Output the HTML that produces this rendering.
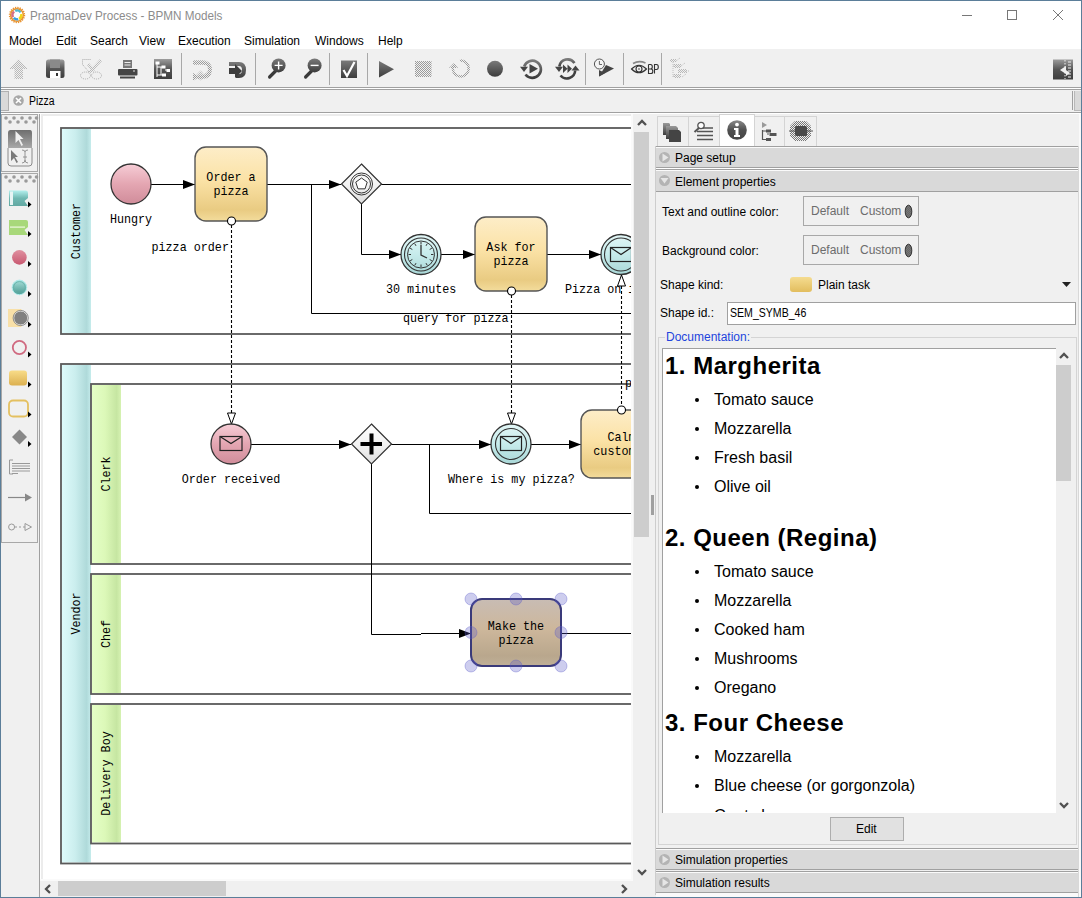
<!DOCTYPE html>
<html><head><meta charset="utf-8">
<style>
*{margin:0;padding:0;box-sizing:border-box}
html,body{width:1082px;height:898px;overflow:hidden;background:#f0f0f0}
body{position:relative;font-family:"Liberation Sans",sans-serif;font-size:12px;color:#000}
.a{position:absolute}
.t{position:absolute;white-space:pre;line-height:1}
svg{position:absolute;overflow:visible}
.hd{position:absolute;left:656px;width:422px;height:22px;background:#d9d9d9;border-top:1px solid #a0a0a0;border-bottom:1px solid #a0a0a0;box-shadow:inset 0 1px 0 #fafafa}
.hd .c{position:absolute;left:3px;top:5px;width:11px;height:11px;border-radius:50%;background:#b4b4b4}
.hd .l{position:absolute;left:19px;top:5px;white-space:pre;line-height:1}
.doc{position:absolute;font-size:16px;white-space:pre;line-height:1}
.h{position:absolute;font-size:24px;font-weight:bold;white-space:pre;line-height:1;letter-spacing:0.5px}
.bu{position:absolute;width:4px;height:4px;border-radius:50%;background:#000}
</style></head><body>
<!-- title bar + menu -->
<div class="a" style="left:1px;top:1px;width:1080px;height:48px;background:#fff"></div>
<svg style="left:8px;top:6px" width="18" height="18" viewBox="0 0 18 18">
 <circle cx="9" cy="9" r="7.4" fill="none" stroke="#e8912c" stroke-width="1.6" stroke-dasharray="1.3 1.03"/>
 <circle cx="9" cy="9" r="6.3" fill="none" stroke="#e8912c" stroke-width="1.5"/>
 <path d="M5.2 11.2 A4.3 4.3 0 0 1 6.2 5.6" stroke="#d47088" stroke-width="2.4" fill="none"/>
 <path d="M7.2 4.9 A4.3 4.3 0 0 1 12.6 6.4" stroke="#50b8d0" stroke-width="2.4" fill="none"/>
 <path d="M13.2 8 A4.3 4.3 0 0 1 11 12.9" stroke="#f2d818" stroke-width="2.4" fill="none"/>
 <path d="M10.2 13.2 A4.3 4.3 0 0 1 5.8 11.8" stroke="#3aa0e0" stroke-width="2.4" fill="none"/>
</svg>
<div class="t" style="left:30px;top:10px;color:#8c8c8c;transform:scaleX(0.975);transform-origin:0 0">PragmaDev Process - BPMN Models</div>
<div class="a" style="left:962px;top:15px;width:10px;height:1px;background:#777"></div>
<div class="a" style="left:1007px;top:10px;width:10px;height:10px;border:1px solid #777"></div>
<svg style="left:1053px;top:10px" width="10" height="10"><path d="M0 0L10 10M10 0L0 10" stroke="#777" stroke-width="1"/></svg>
<div class="t" style="left:9px;top:35px;">Model</div>
<div class="t" style="left:56px;top:35px;">Edit</div>
<div class="t" style="left:90px;top:35px;">Search</div>
<div class="t" style="left:139px;top:35px;">View</div>
<div class="t" style="left:178px;top:35px;">Execution</div>
<div class="t" style="left:244px;top:35px;">Simulation</div>
<div class="t" style="left:315px;top:35px;">Windows</div>
<div class="t" style="left:378px;top:35px;">Help</div>

<!-- TOOLBAR -->
<div id="toolbar"><svg style="left:0;top:0" width="1082" height="120" viewBox="0 0 1082 120">
<defs>
<pattern id="dg" width="2" height="2" patternUnits="userSpaceOnUse"><rect width="1" height="1" fill="#9a9a9a"/><rect x="1" y="1" width="1" height="1" fill="#9a9a9a"/></pattern>
<pattern id="dg2" width="2" height="2" patternUnits="userSpaceOnUse"><rect width="1" height="1" fill="#b8b8b8"/><rect x="1" y="1" width="1" height="1" fill="#b8b8b8"/></pattern>
<linearGradient id="tg" x1="0" y1="0" x2="0" y2="1"><stop offset="0" stop-color="#9c9c9c"/><stop offset="0.5" stop-color="#555"/><stop offset="1" stop-color="#3e3e3e"/></linearGradient>
<linearGradient id="tg2" x1="0" y1="0" x2="0" y2="1"><stop offset="0" stop-color="#7a7a7a"/><stop offset="1" stop-color="#3c3c3c"/></linearGradient>
</defs>
<rect x="181" y="53" width="1" height="32" fill="#a8a8a8"/>
<rect x="255" y="53" width="1" height="32" fill="#a8a8a8"/>
<rect x="329" y="53" width="1" height="32" fill="#a8a8a8"/>
<rect x="367" y="53" width="1" height="32" fill="#a8a8a8"/>
<rect x="585" y="53" width="1" height="32" fill="#a8a8a8"/>
<rect x="623" y="53" width="1" height="32" fill="#a8a8a8"/>
<rect x="661" y="53" width="1" height="32" fill="#a8a8a8"/>
<path d="M18.5 59 L28 69 L23 69 L23 79 L14.5 79 L14.5 69 L9 69Z" fill="url(#dg2)"/>
<rect x="46" y="59.5" width="18.5" height="18.5" rx="2.5" fill="url(#tg)"/>
<rect x="50" y="59.5" width="10" height="8.5" fill="#8a8a8a"/>
<rect x="50" y="71" width="10.5" height="7" fill="#fff"/>
<rect x="56" y="73" width="2" height="3" fill="#333"/>
<g fill="none" stroke="#aaa" stroke-width="1" stroke-dasharray="1 1"><ellipse cx="85.5" cy="75.5" rx="5" ry="3.5"/><ellipse cx="96.5" cy="75.5" rx="5" ry="3.5"/><path d="M89 72 L82.5 64.5 V59.5 H91"/></g>
<path d="M88 72 L100 59 L102 61 L91 73Z M93 72 L87 65 L89 63 L95 70Z" fill="url(#dg2)"/>
<rect x="123" y="60" width="9" height="8" fill="#777"/><path d="M124.5 62.5H130.5M124.5 65H130.5" stroke="#eee" stroke-width="1"/>
<rect x="118" y="69" width="19.5" height="6.5" rx="1" fill="#444"/><rect x="133" y="70.5" width="2" height="1" fill="#ddd"/>
<rect x="120" y="76.5" width="15" height="2" fill="#444"/>
<rect x="154" y="59" width="18" height="20" fill="url(#tg)"/>
<path d="M157 64 V77 M157 67 H163 M161 67 V75 M157 75 H163 M165 70 H167" stroke="#fff" stroke-width="1" fill="none"/>
<rect x="155.5" y="61.5" width="4" height="3" fill="#fff"/><rect x="161.5" y="65.5" width="4" height="3" fill="#fff"/><rect x="166.5" y="69" width="3.5" height="3" fill="#fff"/><rect x="162" y="73.5" width="4" height="3" fill="#fff"/>
<path d="M193 62 H203 A7 7 0 0 1 203 76 H198 L202 72 M198 76 L202 79" fill="none" stroke="url(#dg2)" stroke-width="4"/>
<path d="M193 63 H203 Q210 63 210 69.5 Q210 77 203 77 H198" fill="none" stroke="url(#dg)" stroke-width="3.5"/><path d="M193 73 L199 77 L193 81Z" fill="url(#dg)"/>
<path d="M229 62 H239 Q246 62 246 70 Q246 78 239 78 H236 V74 H239 Q242 74 242 70 Q242 66 239 66 H229Z" fill="url(#tg2)"/>
<path d="M229 68 H235 V64 L242 71 L235 78 V74 H229Z" fill="#3c3c3c"/>
<path d="M269.6 77 L275.6 71" stroke="#3a3a3a" stroke-width="3.2" stroke-linecap="round"/>
<circle cx="278.6" cy="65.4" r="7" fill="url(#tg2)"/>
<path d="M274.6 65.4 H282.6 M278.6 61.4 V69.4" stroke="#fff" stroke-width="1.4"/>
<path d="M305.6 77 L311.6 71" stroke="#3a3a3a" stroke-width="3.2" stroke-linecap="round"/>
<circle cx="314.6" cy="65.4" r="7" fill="url(#tg2)"/>
<path d="M310.6 65.4 H318.6" stroke="#fff" stroke-width="1.4"/>
<rect x="341" y="60.5" width="16" height="17.5" fill="url(#tg2)"/>
<path d="M343.5 70 L347 76 L354.5 62" fill="none" stroke="#fff" stroke-width="2.2"/>
<path d="M379 61 L394 69.2 L379 77.5Z" fill="url(#tg2)"/>
<rect x="415" y="61" width="16.5" height="16" fill="url(#dg)"/>
<path d="M453.5 65 A8 8 0 1 0 460 60.5" fill="none" stroke="url(#dg)" stroke-width="2.4"/><path d="M449 68 L454 63 L458 68Z" fill="url(#dg)"/>
<circle cx="495" cy="68.8" r="8" fill="url(#tg2)"/>
<path d="M524.2 66.5 A8.6 8.6 0 1 1 525.5 74.5" fill="none" stroke="url(#tg2)" stroke-width="2.6"/>
<path d="M520 66.8 L528 66.8 L524 72Z" fill="#444"/>
<path d="M529.5 64 L538 68.8 L529.5 73.5Z" fill="#444"/>
<path d="M559.3 66.5 A8.4 8.4 0 0 1 574.5 63" fill="none" stroke="url(#tg2)" stroke-width="2.6"/>
<path d="M575.2 70.5 A8.4 8.4 0 0 1 560.5 75.5" fill="none" stroke="#404040" stroke-width="2.6"/>
<path d="M555 66.8 L563 66.8 L559 72Z" fill="#444"/><path d="M571.5 70.5 L579.5 70.5 L575.5 65.5Z" fill="#444"/>
<path d="M563 64.5 L567.5 68.8 L563 73Z M567.5 64.5 L572 68.8 L567.5 73Z" fill="#444"/>
<circle cx="599.4" cy="64" r="5" fill="#f4f4f4" stroke="#555" stroke-width="1"/><path d="M599.4 61 V64.5 H602" stroke="#555" stroke-width="0.9" fill="none"/>
<path d="M599 76.5 L614 68.5 L606 65Z" fill="#444"/><path d="M599 70 L599 76.5 L605 73Z" fill="#444"/>
<path d="M631.5 69 Q639 61.5 646.5 69 Q639 76.5 631.5 69Z" fill="none" stroke="#333" stroke-width="1.1"/><circle cx="639" cy="69" r="3" fill="none" stroke="#333" stroke-width="1.1"/><circle cx="639" cy="69" r="0.8" fill="#333"/>
<path d="M633 63.5 Q639 60 645.5 63" fill="none" stroke="#888" stroke-width="1.6"/>
<path d="M648.5 64.5 V73.5 H651 Q652.8 73.5 652.8 71.2 Q652.8 69 651 69 H648.5 M648.5 64.5 H650.6 Q652.3 64.5 652.3 66.7 Q652.3 69 650.6 69" fill="none" stroke="#333" stroke-width="1.1"/>
<path d="M654.5 73.5 V64.5 H656.5 Q658.3 64.5 658.3 67 Q658.3 69.5 656.5 69.5 H654.5" fill="none" stroke="#333" stroke-width="1.1"/>
<g fill="url(#dg2)"><rect x="670" y="59" width="6" height="3"/><rect x="674" y="64" width="7" height="4"/><rect x="678" y="69" width="9" height="4"/><rect x="674" y="74" width="7" height="4"/></g>
<path d="M673 62 V78 M673 66 H675 M673 76 H675 M681 66 L685 63 M682 77 L686 74 M676 61 L680 58 M686 71 L689 71" stroke="#c0c0c0" stroke-width="1" stroke-dasharray="1 1" fill="none"/>
<rect x="1053" y="59.5" width="20" height="20" fill="url(#tg)"/>
<path d="M1065 60 V79" stroke="#f0f0f0" stroke-width="1" stroke-dasharray="1.5 1.5"/><path d="M1066 66 L1060 70 L1066 74Z M1066 70 L1070 73 L1066 76Z" fill="#f0f0f0"/>
<path d="M1068 62 H1071 M1068 65 H1071 M1068 68 H1071 M1068 71 H1071 M1068 74 H1071 M1068 77 H1071" stroke="#f0f0f0" stroke-width="1"/>
</svg></div><!--/toolbar-->

<!-- toolbar bottom lines -->
<div class="a" style="left:1px;top:87px;width:1080px;height:1px;background:#a0a0a0"></div>
<div class="a" style="left:1px;top:88px;width:1080px;height:1px;background:#fff"></div>
<div class="a" style="left:1px;top:89px;width:1080px;height:1px;background:#a0a0a0"></div>
<!-- tab bar -->
<div class="a" style="left:1px;top:91px;width:8px;height:20px;background:#d9d9d9;border:1px solid #b0b0b0;border-left:none"></div>
<svg style="left:13px;top:95px" width="11" height="11"><circle cx="5.5" cy="5.5" r="5.3" fill="#a8a8a8"/><path d="M3 3L8 8M8 3L3 8" stroke="#fff" stroke-width="1.6"/></svg>
<div class="t" style="left:29px;top:95px;transform:scaleX(0.87);transform-origin:0 0">Pizza</div>
<div class="a" style="left:1072px;top:91px;width:1px;height:19px;background:#a0a0a0"></div><div class="a" style="left:1074px;top:91px;width:7px;height:20px;background:#d9d9d9;border-left:1px solid #b8b8b8;border-bottom:1px solid #b8b8b8"></div>
<div class="a" style="left:1px;top:112px;width:1080px;height:1px;background:#a0a0a0"></div>
<div class="a" style="left:1px;top:113px;width:1080px;height:1px;background:#fff"></div>

<!-- PALETTE -->
<div id="palette"><svg style="left:0;top:0" width="45" height="560" viewBox="0 0 45 560">
<defs>
<linearGradient id="pSel" x1="0" y1="0" x2="0" y2="1"><stop offset="0" stop-color="#6e6e6e"/><stop offset="1" stop-color="#a8a8a8"/></linearGradient>
<linearGradient id="pPool" x1="0" y1="0" x2="0" y2="1"><stop offset="0" stop-color="#b4f0ee"/><stop offset="0.5" stop-color="#70b8b2"/><stop offset="1" stop-color="#62a8a2"/></linearGradient>
<linearGradient id="pRed" x1="0" y1="0" x2="0" y2="1"><stop offset="0" stop-color="#e090a0"/><stop offset="1" stop-color="#c85870"/></linearGradient>
<linearGradient id="pTeal" x1="0" y1="0" x2="0" y2="1"><stop offset="0" stop-color="#a8e0da"/><stop offset="1" stop-color="#4a9890"/></linearGradient>
<linearGradient id="pYel" x1="0" y1="0" x2="0" y2="1"><stop offset="0" stop-color="#f8dc88"/><stop offset="1" stop-color="#dcb050"/></linearGradient>
</defs>
<rect x="1.5" y="114.5" width="36" height="57" fill="#f0f0f0" stroke="#a8a8a8" stroke-width="1"/>
<rect x="1.5" y="173.5" width="36" height="369" fill="#f0f0f0" stroke="#a8a8a8" stroke-width="1"/>
<rect x="39" y="114" width="1" height="784" fill="#a8a8a8"/>
<circle cx="6" cy="118" r="1.8" fill="#9a9a9a"/>
<circle cx="14" cy="118" r="1.8" fill="#9a9a9a"/>
<circle cx="22" cy="118" r="1.8" fill="#9a9a9a"/>
<circle cx="30" cy="118" r="1.8" fill="#9a9a9a"/>
<circle cx="36.5" cy="118" r="1.8" fill="#9a9a9a"/>
<circle cx="10" cy="122" r="1.8" fill="#9a9a9a"/>
<circle cx="18" cy="122" r="1.8" fill="#9a9a9a"/>
<circle cx="26" cy="122" r="1.8" fill="#9a9a9a"/>
<circle cx="34" cy="122" r="1.8" fill="#9a9a9a"/>
<circle cx="6" cy="177" r="1.8" fill="#9a9a9a"/>
<circle cx="14" cy="177" r="1.8" fill="#9a9a9a"/>
<circle cx="22" cy="177" r="1.8" fill="#9a9a9a"/>
<circle cx="30" cy="177" r="1.8" fill="#9a9a9a"/>
<circle cx="36.5" cy="177" r="1.8" fill="#9a9a9a"/>
<circle cx="10" cy="181" r="1.8" fill="#9a9a9a"/>
<circle cx="18" cy="181" r="1.8" fill="#9a9a9a"/>
<circle cx="26" cy="181" r="1.8" fill="#9a9a9a"/>
<circle cx="34" cy="181" r="1.8" fill="#9a9a9a"/>
<path d="M10.5 130 H30 Q32 130 32 133 V148 H8 V133 Q8 130 10.5 130Z" fill="url(#pSel)"/>
<path d="M8 148 V163 Q8 166 11 166 H29 Q32 166 32 163 V148" fill="none" stroke="#8a8a8a" stroke-width="1"/>
<path d="M15.5 131 L23.5 139 L20 139 L23 145 L21.5 146 L18.5 140 L15.5 143Z" fill="#f0f0f0"/>
<path d="M11 150 L18 157 L15 157 L18 162 L16.5 163 L14 158 L11 161Z" fill="#7a7a7a"/>
<path d="M22 150 Q25 150 25 152 Q25 150 28 150 M25 152 V160 Q25 163 22 163 M25 160 Q25 163 28 163 M23 157 H27" fill="none" stroke="#8a8a8a" stroke-width="0.9"/>
<path d="M9 190.5 H26 Q28 190.5 28 193 V198 L24.5 201 L28 206 H9Z" fill="url(#pPool)"/>
<rect x="10" y="191.5" width="3" height="13.5" fill="#e8f4f4"/>
<path d="M28 201.5 L31.5 204.5 L28 207.5Z" fill="#000"/>
<path d="M9 220 H26 Q28 220 28 222 V227 L24.5 230 L28 235 H9Z" fill="#a8d87a"/>
<rect x="10" y="226.5" width="15" height="1.2" fill="#eef8e0"/>
<path d="M28 231 L31.5 234 L28 237Z" fill="#000"/>
<circle cx="19.4" cy="257.4" r="7.3" fill="url(#pRed)"/>
<path d="M28 261 L31.5 264 L28 267Z" fill="#000"/>
<circle cx="19.4" cy="287.4" r="7.3" fill="url(#pTeal)" stroke="#b0ecec" stroke-width="1"/>
<circle cx="19.4" cy="287.4" r="5.8" fill="none" stroke="#60b0a8" stroke-width="0.8"/>
<path d="M28 291 L31.5 294 L28 297Z" fill="#000"/>
<rect x="8" y="309" width="13.5" height="18" fill="#f8e0a8"/>
<circle cx="20.7" cy="318" r="7" fill="#808080" stroke="#e8e8e8" stroke-width="1"/>
<circle cx="20.7" cy="318" r="7.6" fill="none" stroke="#777" stroke-width="0.8"/>
<path d="M28 321.5 L31.5 324.5 L28 327.5Z" fill="#000"/>
<circle cx="19.4" cy="347.5" r="6.6" fill="none" stroke="#d06a80" stroke-width="1.8"/>
<path d="M28 351.5 L31.5 354.5 L28 357.5Z" fill="#000"/>
<rect x="9" y="370.5" width="18" height="15" rx="3" fill="url(#pYel)"/>
<path d="M28 381.5 L31.5 384.5 L28 387.5Z" fill="#000"/>
<rect x="9" y="400.5" width="19" height="16" rx="4" fill="none" stroke="#e4c060" stroke-width="1.8"/>
<path d="M28 411.5 L31.5 414.5 L28 417.5Z" fill="#000"/>
<path d="M19.5 429.5 L27 437 L19.5 444.5 L12 437Z" fill="#888"/>
<path d="M28 441 L31.5 444 L28 447Z" fill="#000"/>
<path d="M9.5 460 V474 H13 M9.5 460 H13" fill="none" stroke="#999" stroke-width="1"/>
<rect x="12" y="463" width="18" height="1" fill="#999"/>
<rect x="12" y="465.5" width="18" height="1" fill="#999"/>
<rect x="12" y="468" width="18" height="1" fill="#999"/>
<rect x="12" y="470.5" width="18" height="1" fill="#999"/>
<rect x="12" y="473" width="6" height="1" fill="#999"/>
<path d="M8 497.5 H26" stroke="#888" stroke-width="1.2"/><path d="M25 493.5 L32 497.5 L25 501.5Z" fill="#888"/>
<circle cx="11.6" cy="527" r="3" fill="none" stroke="#999" stroke-width="1"/>
<path d="M15 527 H25" stroke="#999" stroke-width="1" stroke-dasharray="2 2"/>
<path d="M25 523.5 L31.5 527 L25 530.5Z" fill="none" stroke="#999" stroke-width="1"/>
</svg></div><!--/palette-->

<!-- CANVAS -->
<div class="a" style="left:39px;top:114px;width:1px;height:784px;background:#a0a0a0"></div>
<div class="a" style="left:40px;top:114px;width:592px;height:765px;background:#fff"></div>
<div class="a" style="left:41px;top:114px;width:593px;height:2px;background:#ececec"></div>
<div class="a" style="left:41px;top:114px;width:2px;height:766px;background:#ececec"></div>
<div class="a" style="left:631px;top:114px;width:2px;height:767px;background:#fafafa"></div><div class="a" style="left:40px;top:879px;width:593px;height:2px;background:#fafafa"></div><div id="diagram"><svg style="left:0;top:0" width="1082" height="898" viewBox="0 0 1082 898">
<defs>
<clipPath id="cv"><rect x="43" y="116" width="588" height="763"/></clipPath>
<linearGradient id="gTask" x1="0" y1="0" x2="0" y2="1">
 <stop offset="0" stop-color="#fdedc8"/><stop offset="0.45" stop-color="#fbe2a6"/><stop offset="0.85" stop-color="#e9cb82"/><stop offset="1" stop-color="#f3dc9c"/></linearGradient>
<linearGradient id="gSel" x1="0" y1="0" x2="0" y2="1">
 <stop offset="0" stop-color="#c8bcb4"/><stop offset="0.45" stop-color="#cdb79b"/><stop offset="0.85" stop-color="#b9a78d"/><stop offset="1" stop-color="#c0b098"/></linearGradient>
<linearGradient id="gPink" x1="0" y1="0" x2="0" y2="1">
 <stop offset="0" stop-color="#f6cdd6"/><stop offset="0.5" stop-color="#e4a6b2"/><stop offset="1" stop-color="#d08c9a"/></linearGradient>
<linearGradient id="gCyan" x1="0" y1="0" x2="0" y2="1">
 <stop offset="0" stop-color="#e2f6f6"/><stop offset="0.5" stop-color="#c6ebeb"/><stop offset="1" stop-color="#a9d7d7"/></linearGradient>
<linearGradient id="gGw" x1="0" y1="0" x2="0" y2="1">
 <stop offset="0" stop-color="#ffffff"/><stop offset="0.6" stop-color="#f0f0f0"/><stop offset="1" stop-color="#dcdcdc"/></linearGradient>
<linearGradient id="gPoolH" x1="0" y1="0" x2="1" y2="0">
 <stop offset="0" stop-color="#ddfafa"/><stop offset="0.45" stop-color="#cbeeee"/><stop offset="0.85" stop-color="#afdada"/><stop offset="1" stop-color="#c6ecec"/></linearGradient>
<linearGradient id="gLaneH" x1="0" y1="0" x2="1" y2="0">
 <stop offset="0" stop-color="#e4ffc6"/><stop offset="0.45" stop-color="#dcf8b8"/><stop offset="0.85" stop-color="#c6e6a2"/><stop offset="1" stop-color="#d6f2b2"/></linearGradient>
</defs>
<g clip-path="url(#cv)" font-family="Liberation Mono" font-size="12.7" fill="#000">
<rect x="62" y="129" width="29" height="204" fill="url(#gPoolH)"/>
<rect x="61" y="128" width="700" height="206" fill="none" stroke="#5a5a5a" stroke-width="1.8"/>
<text x="76" y="231" transform="rotate(-90 76 231)" text-anchor="middle" dy="4" textLength="56.32" lengthAdjust="spacingAndGlyphs">Customer</text>
<rect x="62" y="365" width="29" height="497.5" fill="url(#gPoolH)"/>
<rect x="61" y="364" width="700" height="499.5" fill="none" stroke="#5a5a5a" stroke-width="1.8"/>
<text x="76" y="613.5" transform="rotate(-90 76 613.5)" text-anchor="middle" dy="4" textLength="42.24" lengthAdjust="spacingAndGlyphs">Vendor</text>
<rect x="92" y="385" width="29" height="178" fill="url(#gLaneH)"/>
<rect x="91" y="384" width="700" height="180" fill="none" stroke="#5a5a5a" stroke-width="1.8"/>
<text x="106" y="474" transform="rotate(-90 106 474)" text-anchor="middle" dy="4" textLength="35.20" lengthAdjust="spacingAndGlyphs">Clerk</text>
<rect x="92" y="575" width="29" height="118" fill="url(#gLaneH)"/>
<rect x="91" y="574" width="700" height="120" fill="none" stroke="#5a5a5a" stroke-width="1.8"/>
<text x="106" y="634" transform="rotate(-90 106 634)" text-anchor="middle" dy="4" textLength="28.16" lengthAdjust="spacingAndGlyphs">Chef</text>
<rect x="92" y="705" width="29" height="137.5" fill="url(#gLaneH)"/>
<rect x="91" y="704" width="700" height="139.5" fill="none" stroke="#5a5a5a" stroke-width="1.8"/>
<text x="106" y="773.5" transform="rotate(-90 106 773.5)" text-anchor="middle" dy="4" textLength="84.48" lengthAdjust="spacingAndGlyphs">Delivery Boy</text>
<path d="M151 184.5 L195 184.5" fill="none" stroke="#000" stroke-width="1.0"/>
<path d="M195 184.5 L183 180.0 L183 189.0Z" fill="#000"/>
<path d="M267 184.5 L341 184.5" fill="none" stroke="#000" stroke-width="1.0"/>
<path d="M341 184.5 L329 180.0 L329 189.0Z" fill="#000"/>
<path d="M311.5 184.5 L311.5 313.5 L640 313.5" fill="none" stroke="#000" stroke-width="1.0"/>
<path d="M381 184.5 L640 184.5" fill="none" stroke="#000" stroke-width="1.0"/>
<path d="M361.5 204 L361.5 254.5 L401 254.5" fill="none" stroke="#000" stroke-width="1.0"/>
<path d="M401 254.5 L389 250.0 L389 259.0Z" fill="#000"/>
<path d="M441 254.5 L475 254.5" fill="none" stroke="#000" stroke-width="1.0"/>
<path d="M475 254.5 L463 250.0 L463 259.0Z" fill="#000"/>
<path d="M547 254.5 L601 254.5" fill="none" stroke="#000" stroke-width="1.0"/>
<path d="M601 254.5 L589 250.0 L589 259.0Z" fill="#000"/>
<circle cx="131" cy="184" r="20" fill="url(#gPink)" stroke="#333" stroke-width="1.3"/>
<rect x="195" y="147" width="72" height="74" rx="11" fill="url(#gTask)" stroke="#555" stroke-width="1.4"/>
<text x="231.0" y="181.0" text-anchor="middle" textLength="49.28" lengthAdjust="spacingAndGlyphs">Order a</text>
<text x="231.0" y="195.0" text-anchor="middle" textLength="35.20" lengthAdjust="spacingAndGlyphs">pizza</text>
<path d="M361.5 164 L381.5 184 L361.5 204 L341.5 184Z" fill="url(#gGw)" stroke="#333" stroke-width="1.2"/>
<circle cx="361.5" cy="184" r="11" fill="none" stroke="#333" stroke-width="1"/>
<circle cx="361.5" cy="184" r="9" fill="none" stroke="#333" stroke-width="1"/>
<path d="M361.50 178.00 L367.21 182.15 L365.03 188.85 L357.97 188.85 L355.79 182.15Z" fill="#fff" stroke="#333" stroke-width="1"/>
<circle cx="421" cy="254.5" r="20" fill="url(#gCyan)" stroke="#333" stroke-width="1.3"/>
<circle cx="421" cy="254.5" r="16.5" fill="none" stroke="#333" stroke-width="1.1"/>
<circle cx="421" cy="254.5" r="13.5" fill="none" stroke="#333" stroke-width="1"/>
<path d="M431.00 254.50 L433.50 254.50" stroke="#333" stroke-width="1"/>
<path d="M429.66 259.50 L431.83 260.75" stroke="#333" stroke-width="1"/>
<path d="M426.00 263.16 L427.25 265.33" stroke="#333" stroke-width="1"/>
<path d="M421.00 264.50 L421.00 267.00" stroke="#333" stroke-width="1"/>
<path d="M416.00 263.16 L414.75 265.33" stroke="#333" stroke-width="1"/>
<path d="M412.34 259.50 L410.17 260.75" stroke="#333" stroke-width="1"/>
<path d="M411.00 254.50 L408.50 254.50" stroke="#333" stroke-width="1"/>
<path d="M412.34 249.50 L410.17 248.25" stroke="#333" stroke-width="1"/>
<path d="M416.00 245.84 L414.75 243.67" stroke="#333" stroke-width="1"/>
<path d="M421.00 244.50 L421.00 242.00" stroke="#333" stroke-width="1"/>
<path d="M426.00 245.84 L427.25 243.67" stroke="#333" stroke-width="1"/>
<path d="M429.66 249.50 L431.83 248.25" stroke="#333" stroke-width="1"/>
<path d="M421 245 V255 L427 258" fill="none" stroke="#333" stroke-width="1.3"/>
<rect x="475" y="217" width="72" height="74" rx="11" fill="url(#gTask)" stroke="#555" stroke-width="1.4"/>
<text x="511.0" y="251.0" text-anchor="middle" textLength="49.28" lengthAdjust="spacingAndGlyphs">Ask for</text>
<text x="511.0" y="265.0" text-anchor="middle" textLength="35.20" lengthAdjust="spacingAndGlyphs">pizza</text>
<circle cx="621" cy="254.5" r="20" fill="url(#gCyan)" stroke="#333" stroke-width="1.3"/>
<circle cx="621" cy="254.5" r="16.5" fill="none" stroke="#333" stroke-width="1.1"/>
<rect x="610.5" y="247.5" width="21" height="14" fill="none" stroke="#222" stroke-width="1.2"/>
<path d="M610.5 247.5 L621 254.5 L631.5 247.5" fill="none" stroke="#222" stroke-width="1.2"/>
<text x="131" y="223" text-anchor="middle" textLength="42.24" lengthAdjust="spacingAndGlyphs">Hungry</text>
<text x="151.5" y="251" text-anchor="start" textLength="77.44" lengthAdjust="spacingAndGlyphs">pizza order</text>
<text x="386" y="292.5" text-anchor="start" textLength="70.40" lengthAdjust="spacingAndGlyphs">30 minutes</text>
<text x="565" y="292.5" text-anchor="start" textLength="112.64" lengthAdjust="spacingAndGlyphs">Pizza on its way</text>
<text x="403" y="321.5" text-anchor="start" textLength="105.60" lengthAdjust="spacingAndGlyphs">query for pizza</text>
<circle cx="231.5" cy="221" r="4" fill="#fff" stroke="#000" stroke-width="1.1"/>
<path d="M231.5 225 V413" stroke="#000" stroke-width="1.1" stroke-dasharray="3 2"/>
<path d="M231.5 424 L227.5 413 L235.5 413Z" fill="#fff" stroke="#000" stroke-width="1"/>
<circle cx="511.5" cy="291" r="4" fill="#fff" stroke="#000" stroke-width="1.1"/>
<path d="M511.5 295 V413" stroke="#000" stroke-width="1.1" stroke-dasharray="3 2"/>
<path d="M511.5 424 L507.5 413 L515.5 413Z" fill="#fff" stroke="#000" stroke-width="1"/>
<path d="M621.5 286 V406" stroke="#000" stroke-width="1.1" stroke-dasharray="3 2"/>
<path d="M621.5 275 L617.5 286 L625.5 286Z" fill="#fff" stroke="#000" stroke-width="1"/>
<path d="M251 444.5 L351 444.5" fill="none" stroke="#000" stroke-width="1.0"/>
<path d="M351 444.5 L339 440.0 L339 449.0Z" fill="#000"/>
<path d="M391 444.5 L491 444.5" fill="none" stroke="#000" stroke-width="1.0"/>
<path d="M491 444.5 L479 440.0 L479 449.0Z" fill="#000"/>
<path d="M429.5 444.5 L429.5 513.5 L640 513.5" fill="none" stroke="#000" stroke-width="1.0"/>
<path d="M531 444.5 L581 444.5" fill="none" stroke="#000" stroke-width="1.0"/>
<path d="M581 444.5 L569 440.0 L569 449.0Z" fill="#000"/>
<path d="M371.5 464 L371.5 634.5 L421 634.5" fill="none" stroke="#000" stroke-width="1.0"/>
<path d="M421 633.5 L471 633.5" fill="none" stroke="#000" stroke-width="1.0"/>
<path d="M471 633.5 L459 629.0 L459 638.0Z" fill="#000"/>
<path d="M561 633.5 L640 633.5" fill="none" stroke="#000" stroke-width="1.0"/>
<circle cx="231" cy="444" r="20" fill="url(#gPink)" stroke="#333" stroke-width="1.3"/>
<rect x="220.0" y="436.5" width="22" height="14" fill="none" stroke="#222" stroke-width="1.2"/>
<path d="M220.0 436.5 L231 443.5 L242.0 436.5" fill="none" stroke="#222" stroke-width="1.2"/>
<path d="M371.5 424 L391.5 444 L371.5 464 L351.5 444Z" fill="url(#gGw)" stroke="#333" stroke-width="1.2"/>
<path d="M371.5 433.5 V454.5 M360.5 444 H382" stroke="#000" stroke-width="4"/>
<circle cx="511" cy="444" r="20" fill="url(#gCyan)" stroke="#333" stroke-width="1.3"/>
<circle cx="511" cy="444" r="15.5" fill="none" stroke="#333" stroke-width="1.1"/>
<rect x="500.5" y="436.5" width="21" height="14" fill="none" stroke="#222" stroke-width="1.2"/>
<path d="M500.5 436.5 L511 443.5 L521.5 436.5" fill="none" stroke="#222" stroke-width="1.2"/>
<rect x="581" y="410" width="81" height="68" rx="11" fill="url(#gTask)" stroke="#555" stroke-width="1.4"/>
<text x="621.5" y="441.0" text-anchor="middle" textLength="28.16" lengthAdjust="spacingAndGlyphs">Calm</text>
<text x="621.5" y="455.0" text-anchor="middle" textLength="56.32" lengthAdjust="spacingAndGlyphs">customer</text>
<circle cx="621.5" cy="410" r="4" fill="#fff" stroke="#000" stroke-width="1.1"/>
<text x="231" y="482.5" text-anchor="middle" textLength="98.56" lengthAdjust="spacingAndGlyphs">Order received</text>
<text x="448" y="483" text-anchor="start" textLength="126.72" lengthAdjust="spacingAndGlyphs">Where is my pizza?</text>
<text x="625" y="386.5" text-anchor="start" textLength="35.20" lengthAdjust="spacingAndGlyphs">pizza</text>
<rect x="471" y="599" width="90" height="67" rx="11" fill="url(#gSel)" stroke="#3a3a7a" stroke-width="2"/>
<text x="516.0" y="629.5" text-anchor="middle" textLength="56.32" lengthAdjust="spacingAndGlyphs">Make the</text>
<text x="516.0" y="643.5" text-anchor="middle" textLength="35.20" lengthAdjust="spacingAndGlyphs">pizza</text>
<circle cx="471" cy="599" r="6" fill="rgba(90,90,200,0.3)" stroke="rgba(90,90,200,0.35)" stroke-width="1"/>
<circle cx="471" cy="632.5" r="6" fill="rgba(90,90,200,0.3)" stroke="rgba(90,90,200,0.35)" stroke-width="1"/>
<circle cx="471" cy="666" r="6" fill="rgba(90,90,200,0.3)" stroke="rgba(90,90,200,0.35)" stroke-width="1"/>
<circle cx="516" cy="599" r="6" fill="rgba(90,90,200,0.3)" stroke="rgba(90,90,200,0.35)" stroke-width="1"/>
<circle cx="516" cy="666" r="6" fill="rgba(90,90,200,0.3)" stroke="rgba(90,90,200,0.35)" stroke-width="1"/>
<circle cx="561" cy="599" r="6" fill="rgba(90,90,200,0.3)" stroke="rgba(90,90,200,0.35)" stroke-width="1"/>
<circle cx="561" cy="632.5" r="6" fill="rgba(90,90,200,0.3)" stroke="rgba(90,90,200,0.35)" stroke-width="1"/>
<circle cx="561" cy="666" r="6" fill="rgba(90,90,200,0.3)" stroke="rgba(90,90,200,0.35)" stroke-width="1"/>
</g></svg></div><!--/diagram-->

<!-- canvas scrollbars -->
<div class="a" style="left:633px;top:114px;width:17px;height:783px;background:#f0f0f0"></div>
<div class="a" style="left:634px;top:132px;width:15px;height:405px;background:#cdcdcd"></div>
<svg style="left:636px;top:119px" width="12" height="8"><path d="M2 6L6 2L10 6" stroke="#505050" stroke-width="2.3" fill="none"/></svg>
<svg style="left:636px;top:868px" width="12" height="8"><path d="M2 2L6 6L10 2" stroke="#505050" stroke-width="2.3" fill="none"/></svg>
<div class="a" style="left:40px;top:881px;width:593px;height:16px;background:#f0f0f0"></div>
<div class="a" style="left:58px;top:881px;width:168px;height:15px;background:#cdcdcd"></div>
<svg style="left:44px;top:883px" width="8" height="12"><path d="M6 2L2 6L6 10" stroke="#505050" stroke-width="2.3" fill="none"/></svg>
<svg style="left:620px;top:883px" width="8" height="12"><path d="M2 2L6 6L2 10" stroke="#505050" stroke-width="2.3" fill="none"/></svg>

<!-- splitter -->
<div class="a" style="left:651px;top:495px;width:3px;height:20px;background:#a0a0a0"></div>

<!-- RIGHT PANEL -->
<div id="right">
<!-- tabs -->
<div class="a" style="left:657px;top:116px;width:32px;height:31px;border:1px solid #d4d4d4;border-bottom:none;background:#f0f0f0"></div>
<div class="a" style="left:688px;top:116px;width:32px;height:31px;border:1px solid #d4d4d4;border-bottom:none;background:#f0f0f0"></div>
<div class="a" style="left:754px;top:116px;width:31px;height:31px;border:1px solid #d4d4d4;border-bottom:none;background:#f0f0f0"></div>
<div class="a" style="left:784px;top:116px;width:33px;height:31px;border:1px solid #d4d4d4;border-bottom:none;background:#f0f0f0"></div>
<div class="a" style="left:719px;top:114px;width:36px;height:33px;border:1px solid #d4d4d4;border-bottom:none;background:#fff"></div>
<!-- tab icons -->
<svg style="left:662px;top:121px" width="22" height="22" viewBox="0 0 22 22">
 <defs><linearGradient id="gi1" x1="0" y1="0" x2="0" y2="1"><stop offset="0" stop-color="#9a9a9a"/><stop offset="1" stop-color="#3c3c3c"/></linearGradient></defs>
 <path d="M1 2H7L8 3V14H1Z" fill="url(#gi1)"/>
 <path d="M4 5H14L16 7V18H4Z" fill="url(#gi1)"/>
 <path d="M7 9H17L19 11V21H7Z" fill="#444"/>
</svg>
<svg style="left:693px;top:121px" width="22" height="22" viewBox="0 0 22 22">
 <circle cx="8" cy="4.5" r="3.2" fill="#fff" stroke="#555" stroke-width="1.3"/>
 <path d="M6 7L1.5 11" stroke="#555" stroke-width="2"/>
 <path d="M10 7H20M4 10.5H20M4 14.5H20M4 18.5H20" stroke="#555" stroke-width="1.6"/>
</svg>
<svg style="left:727px;top:120px" width="20" height="20" viewBox="0 0 20 20">
 <defs><linearGradient id="gi3" x1="0" y1="0" x2="0" y2="1"><stop offset="0" stop-color="#8a8a8a"/><stop offset="0.5" stop-color="#505050"/><stop offset="1" stop-color="#444"/></linearGradient></defs>
 <circle cx="10" cy="10" r="9.8" fill="url(#gi3)"/>
 <circle cx="10" cy="4.6" r="1.9" fill="#fff"/>
 <path d="M7 8H11.5V15H13V17H7V15H8.5V10H7Z" fill="#fff"/>
</svg>
<svg style="left:760px;top:121px" width="22" height="22" viewBox="0 0 22 22">
 <path d="M2 1L7 4L2 7Z" fill="#9a9a9a"/>
 <path d="M2.5 9V19M2.5 10H6M2.5 18.5H6M7 13H9" stroke="#555" stroke-width="1.2"/>
 <rect x="6" y="8.5" width="5" height="3" fill="#555"/>
 <rect x="9.5" y="12" width="7" height="3" fill="#555"/>
 <rect x="6" y="17" width="5" height="3" fill="#555"/>
</svg>
<svg style="left:789px;top:120px" width="24" height="22" viewBox="0 0 24 22">
 <defs><pattern id="dith" width="2" height="2" patternUnits="userSpaceOnUse"><rect width="1" height="1" fill="#777"/><rect x="1" y="1" width="1" height="1" fill="#777"/></pattern></defs>
 <path d="M6 1H17L22 6V16L17 21H6L1 16V6Z" fill="url(#dith)"/>
 <rect x="6" y="6" width="12" height="10" rx="1.5" fill="#4a4a4a"/>
 <path d="M0 11H6M18 11H24" stroke="#555" stroke-width="1"/>
</svg>

<!-- outer panel -->
<div class="a" style="left:655px;top:146px;width:1px;height:749px;background:#cdcdcd"></div>
<div class="hd" style="top:146px;height:22px"><div class="c" style="top:5px"></div><svg style="left:0;top:-1px" width="20" height="20"><path d="M6.5 7.5L12.5 11.5L6.5 15.5Z" fill="#e6e6e6"/></svg><div class="l">Page setup</div></div>
<div class="a" style="left:656px;top:168px;width:422px;height:2px;background:#fff"></div>
<div class="hd" style="top:169px;height:23px"><div class="c" style="top:5px"></div><svg style="left:0;top:-1px" width="20" height="20"><path d="M4.5 9L12.5 9L8.5 14.5Z" fill="#e6e6e6"/></svg><div class="l" style="top:6px">Element properties</div></div>
<div class="a" style="left:1078px;top:146px;width:1px;height:751px;background:#d8d8d8"></div><div class="a" style="left:1079px;top:114px;width:2px;height:783px;background:#fafafa"></div><div class="a" style="left:656px;top:893px;width:422px;height:4px;background:#fafafa"></div>

<div class="t" style="left:662px;top:206px;">Text and outline color:</div>
<div class="a" style="left:803px;top:196px;width:116px;height:30px;border:1px solid #a8a8a8"></div>
<div class="t" style="left:811px;top:205px;color:#6c6c6c">Default</div>
<div class="t" style="left:860px;top:205px;color:#6c6c6c">Custom</div>
<svg style="left:904px;top:204px" width="10" height="16"><ellipse cx="4.5" cy="7.5" rx="3.3" ry="6.3" fill="#666"/><ellipse cx="4.5" cy="7.5" rx="3.3" ry="6.3" fill="url(#dith)"/><ellipse cx="4.5" cy="7.5" rx="3.3" ry="6.3" fill="none" stroke="#333" stroke-width="1"/></svg>
<div class="t" style="left:662px;top:245px;">Background color:</div>
<div class="a" style="left:803px;top:235px;width:116px;height:30px;border:1px solid #a8a8a8"></div>
<div class="t" style="left:811px;top:244px;color:#6c6c6c">Default</div>
<div class="t" style="left:860px;top:244px;color:#6c6c6c">Custom</div>
<svg style="left:904px;top:243px" width="10" height="16"><ellipse cx="4.5" cy="7.5" rx="3.3" ry="6.3" fill="#666"/><ellipse cx="4.5" cy="7.5" rx="3.3" ry="6.3" fill="url(#dith)"/><ellipse cx="4.5" cy="7.5" rx="3.3" ry="6.3" fill="none" stroke="#333" stroke-width="1"/></svg>
<div class="t" style="left:660px;top:279px;">Shape kind:</div>
<div class="a" style="left:790px;top:277px;width:22px;height:15px;border-radius:3px;background:linear-gradient(#f5dc90,#e2bd5e)"></div>
<div class="t" style="left:818px;top:279px;">Plain task</div>
<svg style="left:1062px;top:282px" width="10" height="6"><path d="M0 0H9L4.5 5Z" fill="#222"/></svg>
<div class="t" style="left:660px;top:307px;">Shape id.:</div>
<div class="a" style="left:727px;top:302px;width:349px;height:23px;background:#fff;border:1px solid #a0a0a0"></div>
<div class="t" style="left:730px;top:307px;transform:scaleX(0.88);transform-origin:0 0">SEM_SYMB_46</div>

<!-- documentation group -->
<div class="a" style="left:658px;top:337px;width:419px;height:508px;border:1px solid #d4d4d4"></div>
<div class="t" style="left:665px;top:331px;padding:0 1px;background:#f0f0f0;color:#2244dd">Documentation:</div>
<div class="a" style="left:662px;top:348px;width:395px;height:465px;background:#fff;border-top:1px solid #a0a0a0;border-left:1px solid #a0a0a0;overflow:hidden">
</div>
<div class="h" style="left:665px;top:354px">1. Margherita</div>
<div class="bu" style="left:695px;top:398px"></div><div class="doc" style="left:714px;top:392px">Tomato sauce</div>
<div class="bu" style="left:695px;top:427px"></div><div class="doc" style="left:714px;top:421px">Mozzarella</div>
<div class="bu" style="left:695px;top:456px"></div><div class="doc" style="left:714px;top:450px">Fresh basil</div>
<div class="bu" style="left:695px;top:485px"></div><div class="doc" style="left:714px;top:479px">Olive oil</div>
<div class="h" style="left:665px;top:526px">2. Queen (Regina)</div>
<div class="bu" style="left:695px;top:570px"></div><div class="doc" style="left:714px;top:564px">Tomato sauce</div>
<div class="bu" style="left:695px;top:599px"></div><div class="doc" style="left:714px;top:593px">Mozzarella</div>
<div class="bu" style="left:695px;top:628px"></div><div class="doc" style="left:714px;top:622px">Cooked ham</div>
<div class="bu" style="left:695px;top:657px"></div><div class="doc" style="left:714px;top:651px">Mushrooms</div>
<div class="bu" style="left:695px;top:686px"></div><div class="doc" style="left:714px;top:680px">Oregano</div>
<div class="h" style="left:665px;top:711px">3. Four Cheese</div>
<div class="bu" style="left:695px;top:755px"></div><div class="doc" style="left:714px;top:749px">Mozzarella</div>
<div class="bu" style="left:695px;top:784px"></div><div class="doc" style="left:714px;top:778px">Blue cheese (or gorgonzola)</div>
<div class="a" style="left:663px;top:805px;width:393px;height:7px;overflow:hidden"><div class="doc" style="left:51px;top:3px">Goat cheese</div></div>
<!-- doc scrollbar -->
<div class="a" style="left:1056px;top:348px;width:17px;height:465px;background:#f0f0f0"></div>
<div class="a" style="left:1056px;top:365px;width:15px;height:116px;background:#cdcdcd"></div>
<svg style="left:1058px;top:352px" width="12" height="8"><path d="M2 6L6 2L10 6" stroke="#505050" stroke-width="2.3" fill="none"/></svg>
<svg style="left:1058px;top:801px" width="12" height="8"><path d="M2 2L6 6L10 2" stroke="#505050" stroke-width="2.3" fill="none"/></svg>
<!-- edit button -->
<div class="a" style="left:830px;top:817px;width:74px;height:24px;background:#e1e1e1;border:1px solid #adadad"></div>
<div class="t" style="left:856px;top:823px;">Edit</div>

<div class="hd" style="top:848px;height:22px"><div class="c" style="top:5px"></div><svg style="left:0;top:-1px" width="20" height="20"><path d="M6.5 7.5L12.5 11.5L6.5 15.5Z" fill="#e6e6e6"/></svg><div class="l">Simulation properties</div></div>
<div class="hd" style="top:871px;height:22px"><div class="c" style="top:5px"></div><svg style="left:0;top:-1px" width="20" height="20"><path d="M6.5 7.5L12.5 11.5L6.5 15.5Z" fill="#e6e6e6"/></svg><div class="l">Simulation results</div></div>
</div>

<!-- window border -->
<div class="a" style="left:0;top:0;width:1082px;height:898px;border:1px solid #5b7e99;z-index:50;pointer-events:none"></div>
</body></html>
